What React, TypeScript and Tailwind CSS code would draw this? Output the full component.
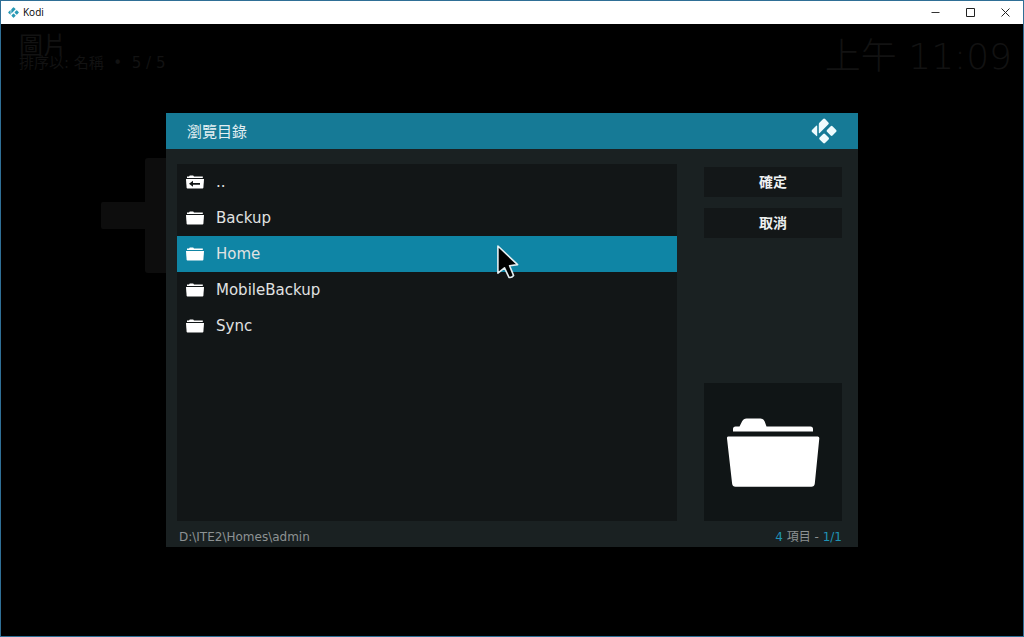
import { useState } from 'react'
import { clsx } from 'clsx'

interface Entry {
  name: string
  parent?: boolean
}

const entries: Entry[] = [
  { name: '..', parent: true },
  { name: 'Backup' },
  { name: 'Home' },
  { name: 'MobileBackup' },
  { name: 'Sync' },
]

function KodiLogo({ className, color }: { className?: string; color: string }) {
  return (
    <svg viewBox="0 0 26 26" fill={color} className={className} aria-hidden="true">
      <path d="M12.1 1.1Q13.1.1 14.1 1.1L17.4 4.4Q18.3 5.3 17.4 6.2L8.7 15Q7.8 15.8 7.8 14.6V6.2Q7.8 5.3 8.6 4.6Z" />
      <path d="M6.2 8.3V17.4Q6.2 18.7 5.2 17.8L1 13.9Q.1 13 1 12.1L5.2 7.7Q6.2 6.9 6.2 8.3Z" />
      <path d="M19.7 8.2Q20.6 7.3 21.5 8.2L25.2 12Q26 12.9 25.2 13.8L21.5 17.5Q20.6 18.3 19.7 17.5L16 13.8Q15.1 12.9 16 12Z" />
      <path d="M12.2 16Q13.1 15.1 14 16L17.6 19.6Q18.5 20.5 17.6 21.4L14 25Q13.1 25.8 12.2 25L8.6 21.4Q7.7 20.5 8.6 19.6Z" />
    </svg>
  )
}

function FolderIcon({ parent = false }: { parent?: boolean }) {
  return (
    <svg viewBox="0 0 18 14" fill="#fff" className="h-3.5 w-[18px] shrink-0" aria-hidden="true">
      <path d="M1 3V1.6H3L3.8 .4H7.2L8 1.6H16.8V3Z" />
      <path d="M0 4H18L17.4 12.8Q17.3 13.5 16.6 13.5H1.4Q.7 13.5 .6 12.8Z" />
      {parent && <path d="M3 8.8L7 5.8V7.9H14V9.7H7V11.8Z" fill="#111516" />}
    </svg>
  )
}

function LargeFolder() {
  return (
    <svg viewBox="0 0 93 69" fill="#fff" className="h-[69px] w-[93px]" aria-hidden="true">
      <path d="M6 13.5V11Q6 8.5 8.5 8.5H12.5L15 3.5Q16.5 .5 19.5 .5H33.5Q36.5 .5 37.7 3.5L39.5 8.5H83.5Q86 8.5 86 11V13.5Z" />
      <path d="M1.3 18.5H90.7Q92.5 18.5 92.3 20.5L87.8 65.5Q87.4 68.8 84.3 68.8H8.5Q5.5 68.8 5.1 65.5L0 20.5Q-.3 18.5 1.3 18.5Z" />
    </svg>
  )
}

function Cursor() {
  return (
    <svg
      viewBox="0 0 24 36"
      className="pointer-events-none absolute top-2 left-[64%] z-10 h-9 w-6"
      aria-hidden="true"
    >
      <path
        d="M.9 2V29.2L7.5 23.8L12 33.4Q14.8 34 16.6 31.6L12.6 21.8L20.6 20.6Z"
        fill="#000"
        stroke="#e4eff2"
        strokeWidth="1.6"
        strokeLinejoin="round"
      />
    </svg>
  )
}

function TitleBar() {
  return (
    <header className="flex h-[23px] items-center justify-between bg-white pl-[7px] text-black">
      <div className="flex items-center gap-1">
        <KodiLogo color="#2798b4" className="h-[11px] w-[11px]" />
        <span className="font-['Open_Sans','Noto_Sans',sans-serif] text-[10px]">Kodi</span>
      </div>
      <div className="flex h-full">
        <button aria-label="Minimize" className="flex w-[35px] items-center justify-center">
          <svg viewBox="0 0 9 9" className="h-[9px] w-[9px]" stroke="#333" fill="none">
            <path d="M.5 4.5H8.5" />
          </svg>
        </button>
        <button aria-label="Maximize" className="flex w-[35px] items-center justify-center">
          <svg viewBox="0 0 9 9" className="h-[9px] w-[9px]" stroke="#222" fill="none">
            <path d="M.5 .5H8.5V8.5H.5Z" />
          </svg>
        </button>
        <button aria-label="Close" className="flex w-[35px] items-center justify-center">
          <svg viewBox="0 0 9 9" className="h-[9px] w-[9px]" stroke="#222" fill="none">
            <path d="M.5 .5L8.5 8.5M8.5 .5L.5 8.5" />
          </svg>
        </button>
      </div>
    </header>
  )
}

// Dimmed picture library that stays visible behind the dialog
function Backdrop() {
  return (
    <div className="pr-[11px] pl-[18px] text-[#121212]">
      <div className="flex items-start justify-between">
        <div className="pt-2">
          <h1 className="h-[22px] text-2xl leading-7">圖片</h1>
          <p className="text-[15px] leading-[18px] whitespace-pre">排序以: 名稱  •  5 / 5</p>
        </div>
        <time className="pt-[13px] text-4xl leading-10 font-extralight">上午 11:09</time>
      </div>
      <svg viewBox="0 0 130 115" fill="#0d0d0d" className="mt-[81px] ml-[82px] h-[115px] w-[130px]" aria-hidden="true">
        <path d="M2 44H44V3Q44 0 47 0H130V115H47Q44 115 44 112V71H2Q0 71 0 69V46Q0 44 2 44Z" />
      </svg>
    </div>
  )
}

function BrowseDialog() {
  const [selected, setSelected] = useState('Home')

  return (
    <section
      role="dialog"
      aria-labelledby="dialog-title"
      className="w-full max-w-[692px] bg-[#1a2122]"
    >
      <div className="flex h-9 items-center justify-between bg-[#167a96] px-[21px]">
        <h2 id="dialog-title" className="pt-0.5 text-[15px] text-[#e3eff2]">瀏覽目錄</h2>
        <KodiLogo color="#effbfd" className="h-[26px] w-[26px]" />
      </div>

      <div className="flex gap-[27px] pt-[15px] pr-4 pl-[11px]">
        <ul className="min-h-[357px] flex-1 bg-[#121617]">
          {entries.map((entry) => (
            <li key={entry.name} className="relative">
              <button
                onClick={() => setSelected(entry.name)}
                className={clsx(
                  'flex h-9 w-full items-center gap-3 pl-[9px] text-left text-[15px] text-[#e0e2e2]',
                  selected === entry.name && 'bg-[#0f85a5]'
                )}
              >
                <FolderIcon parent={entry.parent} />
                <span>{entry.name}</span>
              </button>
              {entry.name === 'Home' && <Cursor />}
            </li>
          ))}
        </ul>

        <div className="flex w-[138px] flex-col gap-[11px] pt-[3px]">
          <button className="h-[30px] bg-[#131718] text-sm font-bold text-[#eef0f0]">確定</button>
          <button className="h-[30px] bg-[#131718] text-sm font-bold text-[#eef0f0]">取消</button>
          <div className="mt-auto flex h-[138px] items-center justify-center bg-[#101516]">
            <LargeFolder />
          </div>
        </div>
      </div>

      <footer className="flex h-[26px] items-center justify-between pt-1.5 pr-4 pl-[13px] text-xs text-[#8d9293]">
        <span>D:\ITE2\Homes\admin</span>
        <span>
          <span className="text-[#1f93b5]">4</span> 項目 - <span className="text-[#1f93b5]">1/1</span>
        </span>
      </footer>
    </section>
  )
}

export default function App() {
  return (
    <div className="flex min-h-screen flex-col border border-[#2f6f96] bg-black font-['DejaVu_Sans','Noto_Sans_CJK_TC',sans-serif]">
      <TitleBar />
      <main className="relative flex-1">
        <Backdrop />
        <div className="absolute inset-0 flex items-center justify-center">
          <BrowseDialog />
        </div>
      </main>
    </div>
  )
}
